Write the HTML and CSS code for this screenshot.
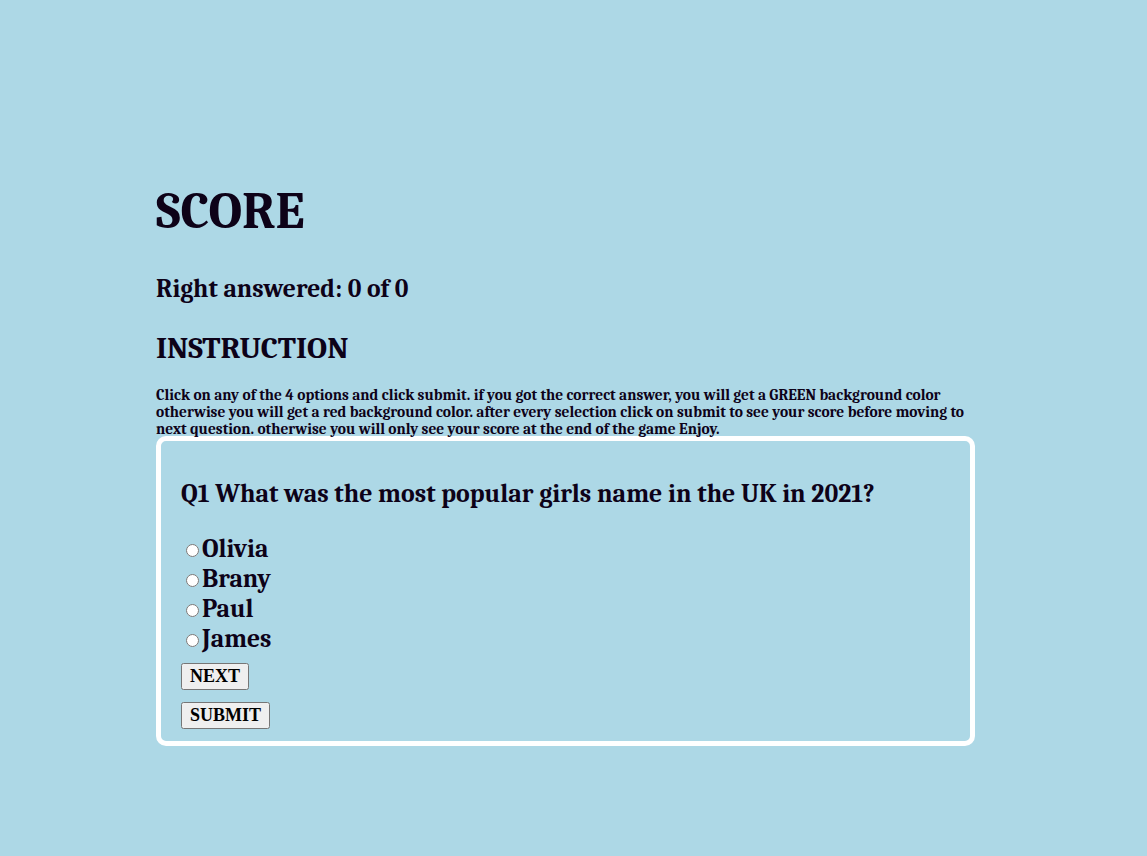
FILE: index.html
```html
<!DOCTYPE html>
<html>
<head>
<meta charset="utf-8">
<link rel="stylesheet" href="styles.css">
</head>
<body>
<main class="page">
  <h1 class="title">SCORE</h1>
  <h2 class="score">Right answered: 0 of 0</h2>
  <h2 class="instr-title">INSTRUCTION</h2>
  <p class="instr">Click on any of the 4 options and click submit. if you got the correct answer, you will get a GREEN background color otherwise you will get a red background color. after every selection click on submit to see your score before moving to next question. otherwise you will only see your score at the end of the game Enjoy.</p>
  <section class="quiz">
    <h3 class="question">Q1 What was the most popular girls name in the UK in 2021?</h3>
    <ul class="options">
      <li><input type="radio" name="a" id="a1"><label for="a1">Olivia</label></li>
      <li><input type="radio" name="a" id="a2"><label for="a2">Brany</label></li>
      <li><input type="radio" name="a" id="a3"><label for="a3">Paul</label></li>
      <li><input type="radio" name="a" id="a4"><label for="a4">James</label></li>
    </ul>
    <div class="buttons">
      <button class="btn">NEXT</button>
      <button class="btn">SUBMIT</button>
    </div>
  </section>
</main>
</body>
</html>
```
FILE: styles.css
```css
html, body {
  margin: 0;
  padding: 0;
  background: #add8e6;
}
body {
  font-family: Cambria, Caladea, "Liberation Serif", serif;
  font-weight: bold;
  color: #0d0218;
}
.page {
  width: 819px;
  margin-left: 156px;
  padding-top: 180px;
}
.title {
  font-size: 52px;
  margin: 0 0 32px;
  line-height: 1.2;
}
.score {
  font-size: 25.6px;
  line-height: 30px;
  margin: 0 0 26px;
}
.instr-title {
  font-size: 31px;
  line-height: 36px;
  margin: 0 0 21px;
}
.instr {
  font-size: 15.4px;
  line-height: 17px;
  margin: 0;
}
.quiz {
  border: 5px solid #fff;
  border-radius: 10px;
  padding: 20px 20px 12px;
  margin-top: -2px;
}
.question {
  font-size: 25.8px;
  line-height: 30px;
  margin: 18px 0 25px;
}
.options {
  list-style: none;
  margin: 0;
  padding: 0;
  font-size: 25.6px;
  line-height: 30px;
}
.options input {
  margin: 3px 3px 0 5px;
}
.buttons {
  display: flex;
  flex-direction: column;
  align-items: flex-start;
  gap: 12px;
  margin-top: 9px;
}
.btn {
  font-family: "Liberation Serif", serif;
  font-weight: bold;
  font-size: 18px;
  padding: 1px 7px;
}
```
